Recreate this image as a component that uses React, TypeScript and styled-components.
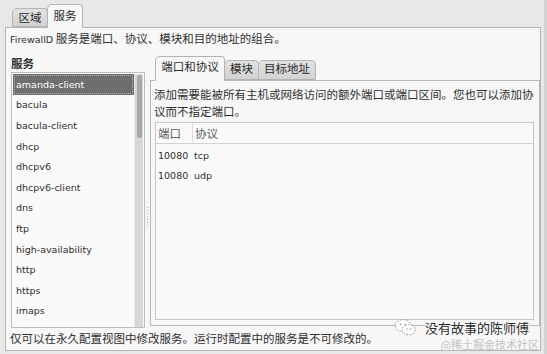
import { FC } from "react";
import styled, { createGlobalStyle } from "styled-components";

const GlobalStyle = createGlobalStyle`
	body {
		margin: 0;
		background-color: #e8e8e8;
		font-family: "Noto Sans CJK SC", "DejaVu Sans", sans-serif;
		color: #2f2f2f;
	}
`;

const Window = styled.div`
	width: 547px;
	height: 354px;
	box-sizing: border-box;
	padding: 0 3px 3px 5px;
	border-right: 3px solid #d2d2d2;

	display: flex;
	flex-direction: column;

	background-color: #e8e8e8;
	overflow: hidden;
	position: relative;
	font-size: 11.5px;
`;

const TabBar = styled.div<{ $indent: number; $height: number }>`
	height: ${p => p.$height}px;
	padding-left: ${p => p.$indent}px;

	display: flex;
	align-items: flex-end;
	flex-shrink: 0;
	position: relative;
	z-index: 1;
`;

const Tab = styled.div<{ $active?: boolean; $width: number; $lift: number; $raise?: number }>`
	width: ${p => p.$width}px;
	height: ${p => p.$lift}px;
	box-sizing: border-box;
	padding-bottom: ${p => p.$raise ?? 0}px;

	display: flex;
	align-items: center;
	justify-content: center;

	background: ${p =>
		p.$active
			? "#f7f7f7"
			: "linear-gradient(#e2e2e2, #d2d2d2)"};
	border: 1px solid #b3b3b3;
	border-bottom: ${p => (p.$active ? "1px solid #f7f7f7" : "1px solid #b3b3b3")};
	border-radius: 5px 4px 0 0;
	margin-bottom: ${p => (p.$active ? -1 : 0)}px;
	margin-left: -1px;
	line-height: 1;
	color: #2b2b2b;
`;

const Page = styled.div`
	flex: 1;
	min-height: 0;
	padding: 2px 3px 3px 4px;

	display: flex;
	flex-direction: column;

	background-color: #f7f7f7;
	border: 1px solid #b5b5b5;
`;

const Line = styled.div<{ $height: number }>`
	height: ${p => p.$height}px;
	line-height: ${p => p.$height}px;
	white-space: nowrap;
`;

const Latin = styled.span`
	font-family: "DejaVu Sans", sans-serif;
	font-size: 9.5px;
`;

const Split = styled.div`
	flex: 1;
	min-height: 0;
	margin-top: 9px;

	display: grid;
	grid-template-columns: 135px 5px 1fr;
`;

const LeftColumn = styled.div`
	display: flex;
	flex-direction: column;
	padding-left: 1px;
`;

const SideLabel = styled.div`
	height: 17px;
	line-height: 17px;
	font-weight: 700;
`;

const ListBox = styled.div`
	height: 256px;
	box-sizing: border-box;
	padding: 1px 1px 0 1px;

	display: flex;

	background-color: #fafafa;
	border: 1px solid #bdbdbd;
	overflow: hidden;
`;

const Rows = styled.div`
	flex: 1;
	overflow: hidden;
`;

const Row = styled.div<{ $selected?: boolean }>`
	height: 20.6px;
	box-sizing: border-box;
	padding-left: 3px;

	display: flex;
	align-items: center;

	font-family: "DejaVu Sans", sans-serif;
	font-size: 9.5px;
	color: ${p => (p.$selected ? "#ffffff" : "#2f2f2f")};
	background-color: ${p => (p.$selected ? "#6e6e6e" : "transparent")};
	outline: ${p => (p.$selected ? "1px dotted #b9b9b9" : "none")};
	outline-offset: -2px;
`;

const Scrollbar = styled.div`
	width: 9px;
	padding: 1px 1px 0 2px;
	box-sizing: border-box;
	background-color: #d7d7d7;
	border-left: 1px solid #e9e9e9;
`;

const Thumb = styled.div`
	height: 63px;
	background-color: #a9a9a9;
	border-radius: 3px;
`;

const Handle = styled.div`
	display: flex;
	align-items: center;
	justify-content: center;
	padding-top: 50px;

	&::before {
		content: "";
		width: 1px;
		height: 20px;
		background-image: linear-gradient(#b0b0b0 50%, transparent 50%);
		background-size: 1px 3px;
	}
`;

const RightColumn = styled.div`
	display: flex;
	flex-direction: column;
	margin-top: -1px;
`;

const InnerPage = styled.div`
	height: 246px;
	box-sizing: border-box;
	padding: 5px 5px 5px 3px;

	display: flex;
	flex-direction: column;

	background-color: #f7f7f7;
	border: 1px solid #b8b8b8;
`;

const Table = styled.div`
	flex: 1;
	margin-top: 2px;
	margin-left: 1px;

	display: flex;
	flex-direction: column;

	background-color: #fafafa;
	border: 1px solid #c6c6c6;
`;

const TableRow = styled.div<{ $header?: boolean }>`
	height: ${p => (p.$header ? 20 : 20.3)}px;
	display: grid;
	grid-template-columns: 36px 1fr;
	align-items: center;

	border-bottom: ${p => (p.$header ? "1px solid #d2d2d2" : "none")};
	margin-bottom: ${p => (p.$header ? 1 : 0)}px;
	color: ${p => (p.$header ? "#5e5e5e" : "#2f2f2f")};
`;

const Cell = styled.div<{ $latin?: boolean; $divider?: boolean }>`
	padding-left: 2px;
	height: 100%;
	display: flex;
	align-items: center;
	font-family: ${p =>
		p.$latin ? '"DejaVu Sans", sans-serif' : '"Noto Sans CJK SC", sans-serif'};
	font-size: ${p => (p.$latin ? 9.5 : 11.5)}px;
	border-left: ${p => (p.$divider ? "1px solid #dedede" : "none")};
`;

const Footer = styled.div`
	height: 18px;
	line-height: 18px;
	margin-top: 1px;
	white-space: nowrap;
`;

const Watermark = styled.div`
	position: absolute;
	right: 15px;
	bottom: 17px;

	display: flex;
	align-items: center;
	gap: 7px;

	font-family: "Noto Sans CJK SC", sans-serif;
	font-size: 13px;
	color: #2a2a2a;
	text-shadow: 0 0 2px #fff, 0 0 2px #fff, 0 0 2px #fff;
`;

const Credit = styled.div`
	position: absolute;
	right: 5px;
	bottom: 2px;

	font-family: "Noto Sans CJK SC", sans-serif;
	font-size: 11px;
	color: #c3c3c3;
`;

const services = [
	"amanda-client",
	"bacula",
	"bacula-client",
	"dhcp",
	"dhcpv6",
	"dhcpv6-client",
	"dns",
	"ftp",
	"high-availability",
	"http",
	"https",
	"imaps",
];

const ports = [
	{ port: "10080", proto: "tcp" },
	{ port: "10080", proto: "udp" },
];

const ChatIcon: FC = () => (
	<svg width="24" height="19" viewBox="0 0 26 20">
		<ellipse cx="10" cy="8" rx="8.5" ry="6.5" fill="#fff" stroke="#9a9a9a" strokeWidth="1" strokeDasharray="2 1.5" />
		<ellipse cx="16" cy="12.5" rx="7" ry="5.5" fill="#fff" stroke="#8a8a8a" strokeWidth="1" strokeDasharray="2 1.5" />
		<circle cx="7" cy="6.5" r="0.9" fill="#8a8a8a" />
		<circle cx="12" cy="6.5" r="0.9" fill="#8a8a8a" />
		<circle cx="14" cy="11.5" r="0.8" fill="#8a8a8a" />
		<circle cx="18" cy="11.5" r="0.8" fill="#8a8a8a" />
	</svg>
);

const App: FC = () => {
	return (
		<Window>
			<GlobalStyle />
			<TabBar $indent={8} $height={27}>
				<Tab $width={36} $lift={19}>区域</Tab>
				<Tab $active $width={36} $lift={24}>服务</Tab>
			</TabBar>
			<Page>
				<Line $height={16}>
					<Latin>FirewallD</Latin> 服务是端口、协议、模块和目的地址的组合。
				</Line>
				<Split>
					<LeftColumn>
						<SideLabel>服务</SideLabel>
						<ListBox>
							<Rows>
								{services.map((name, i) => (
									<Row key={name} $selected={i === 0}>
										{name}
									</Row>
								))}
							</Rows>
							<Scrollbar>
								<Thumb />
							</Scrollbar>
						</ListBox>
					</LeftColumn>
					<Handle />
					<RightColumn>
						<TabBar $indent={6} $height={26}>
							<Tab $active $width={70} $lift={25} $raise={3}>端口和协议</Tab>
							<Tab $width={35} $lift={20} $raise={2}>模块</Tab>
							<Tab $width={58} $lift={20} $raise={2}>目标地址</Tab>
						</TabBar>
						<InnerPage>
							<Line $height={17}>
								添加需要能被所有主机或网络访问的额外端口或端口区间。您也可以添加协
							</Line>
							<Line $height={17}>议而不指定端口。</Line>
							<Table>
								<TableRow $header>
									<Cell>端口</Cell>
									<Cell $divider>协议</Cell>
								</TableRow>
								{ports.map((row, i) => (
									<TableRow key={i}>
										<Cell $latin>{row.port}</Cell>
										<Cell $latin>{row.proto}</Cell>
									</TableRow>
								))}
							</Table>
						</InnerPage>
					</RightColumn>
				</Split>
				<Footer>仅可以在永久配置视图中修改服务。运行时配置中的服务是不可修改的。</Footer>
			</Page>
			<Watermark>
				<ChatIcon />
				没有故事的陈师傅
			</Watermark>
			<Credit>@稀土掘金技术社区</Credit>
		</Window>
	);
};

export default App;
